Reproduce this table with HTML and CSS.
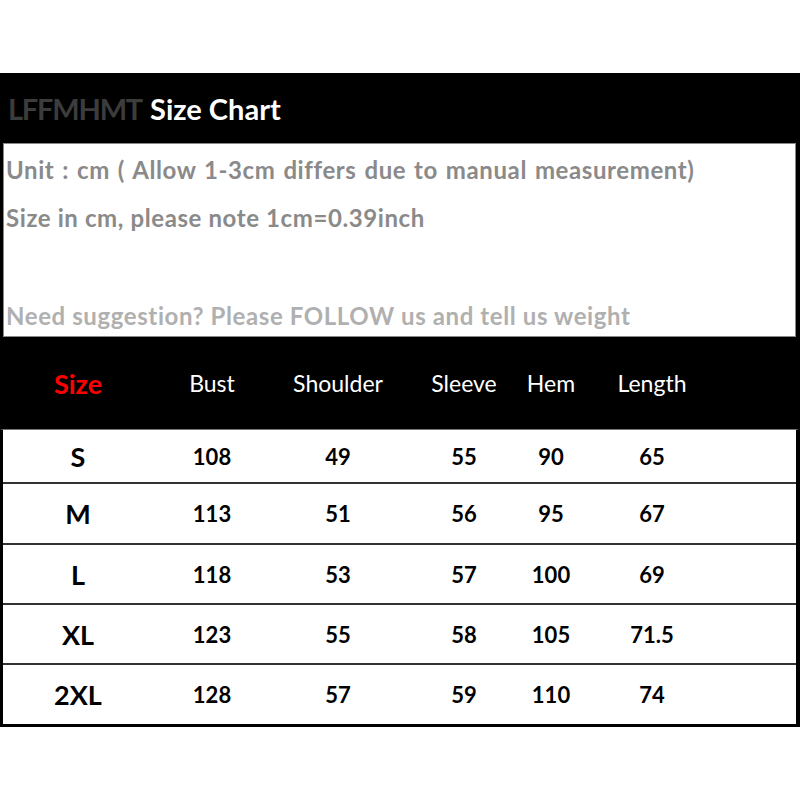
FILE: index.html
```html
<!DOCTYPE html>
<html>
<head>
<meta charset="utf-8">
<link rel="stylesheet" href="styles.css">
</head>
<body>
<div class="chart">
  <div class="titlebar"><span class="brand">LFFMHMT</span><span class="title">Size Chart</span></div>
  <div class="info">
    <div class="line l1">Unit : cm ( Allow 1-3cm differs due to manual measurement)</div>
    <div class="line l2">Size in cm, please note 1cm=0.39inch</div>
    <div class="line l3">Need suggestion? Please FOLLOW us and tell us weight</div>
  </div>
  <div class="thead grid">
    <div class="c size">Size</div>
    <div class="c">Bust</div>
    <div class="c">Shoulder</div>
    <div class="c">Sleeve</div>
    <div class="c">Hem</div>
    <div class="c">Length</div>
    <div></div>
  </div>
  <div class="tbody">
    <div class="row grid"><div class="c first">S</div><div class="c">108</div><div class="c">49</div><div class="c">55</div><div class="c">90</div><div class="c">65</div><div></div></div>
    <div class="row grid"><div class="c first">M</div><div class="c">113</div><div class="c">51</div><div class="c">56</div><div class="c">95</div><div class="c">67</div><div></div></div>
    <div class="row grid"><div class="c first">L</div><div class="c">118</div><div class="c">53</div><div class="c">57</div><div class="c">100</div><div class="c">69</div><div></div></div>
    <div class="row grid"><div class="c first">XL</div><div class="c">123</div><div class="c">55</div><div class="c">58</div><div class="c">105</div><div class="c">71.5</div><div></div></div>
    <div class="row grid"><div class="c first">2XL</div><div class="c">128</div><div class="c">57</div><div class="c">59</div><div class="c">110</div><div class="c">74</div><div></div></div>
  </div>
</div>
</body>
</html>
```

FILE: styles.css
```css
html, body {
  margin: 0;
  padding: 0;
  background: #fff;
}
body {
  padding-top: 73px;
  font-family: Lato, "Open Sans", sans-serif;
}
.chart {
  width: 800px;
  background: #000;
}
.titlebar {
  height: 70px;
  display: flex;
  align-items: center;
  padding-left: 8px;
  font-weight: 700;
  font-size: 29px;
}
.brand {
  color: #3c3c3c;
  letter-spacing: -1.2px;
}
.title {
  color: #fff;
  margin-left: 8px;
}
.info {
  margin: 0 4px 0 3px;
  height: 192px;
  background: #fff;
  border: 1px solid #888;
  display: flex;
  flex-direction: column;
  padding-left: 2px;
  font-weight: 700;
  font-size: 24px;
  letter-spacing: 0.6px;
  color: #8a8a8a;
  white-space: nowrap;
}
.line {
  height: 30px;
  line-height: 30px;
}
.l1 { margin-top: 11px; word-spacing: 1.5px; }
.l2 { margin-top: 18px; }
.l3 { margin-top: 68px; color: #b0b0b0; }
.grid {
  display: grid;
  grid-template-columns: 150px 118px 134px 118px 56px 146px 1fr;
  align-items: center;
}
.thead {
  height: 92px;
  padding-left: 3px;
  color: #fff;
  font-size: 23px;
}
.c {
  text-align: center;
  white-space: nowrap;
}
.size {
  color: #f00;
  font-weight: 700;
  font-size: 27px;
}
.tbody {
  margin: 0 1px 0 0;
  border-left: 3px solid #000;
  border-right: 3px solid #000;
  border-bottom: 3px solid #000;
  border-top: 1px solid #777;
  background: #fff;
}
.row {
  height: 58px;
  border-top: 2px solid #333;
  font-weight: 700;
  font-size: 22px;
  color: #000;
}
.row:first-child {
  height: 52px;
  border-top: none;
}
.row:nth-child(2),
.row:last-child {
  height: 59px;
}
.first {
  font-size: 27px;
}
```
